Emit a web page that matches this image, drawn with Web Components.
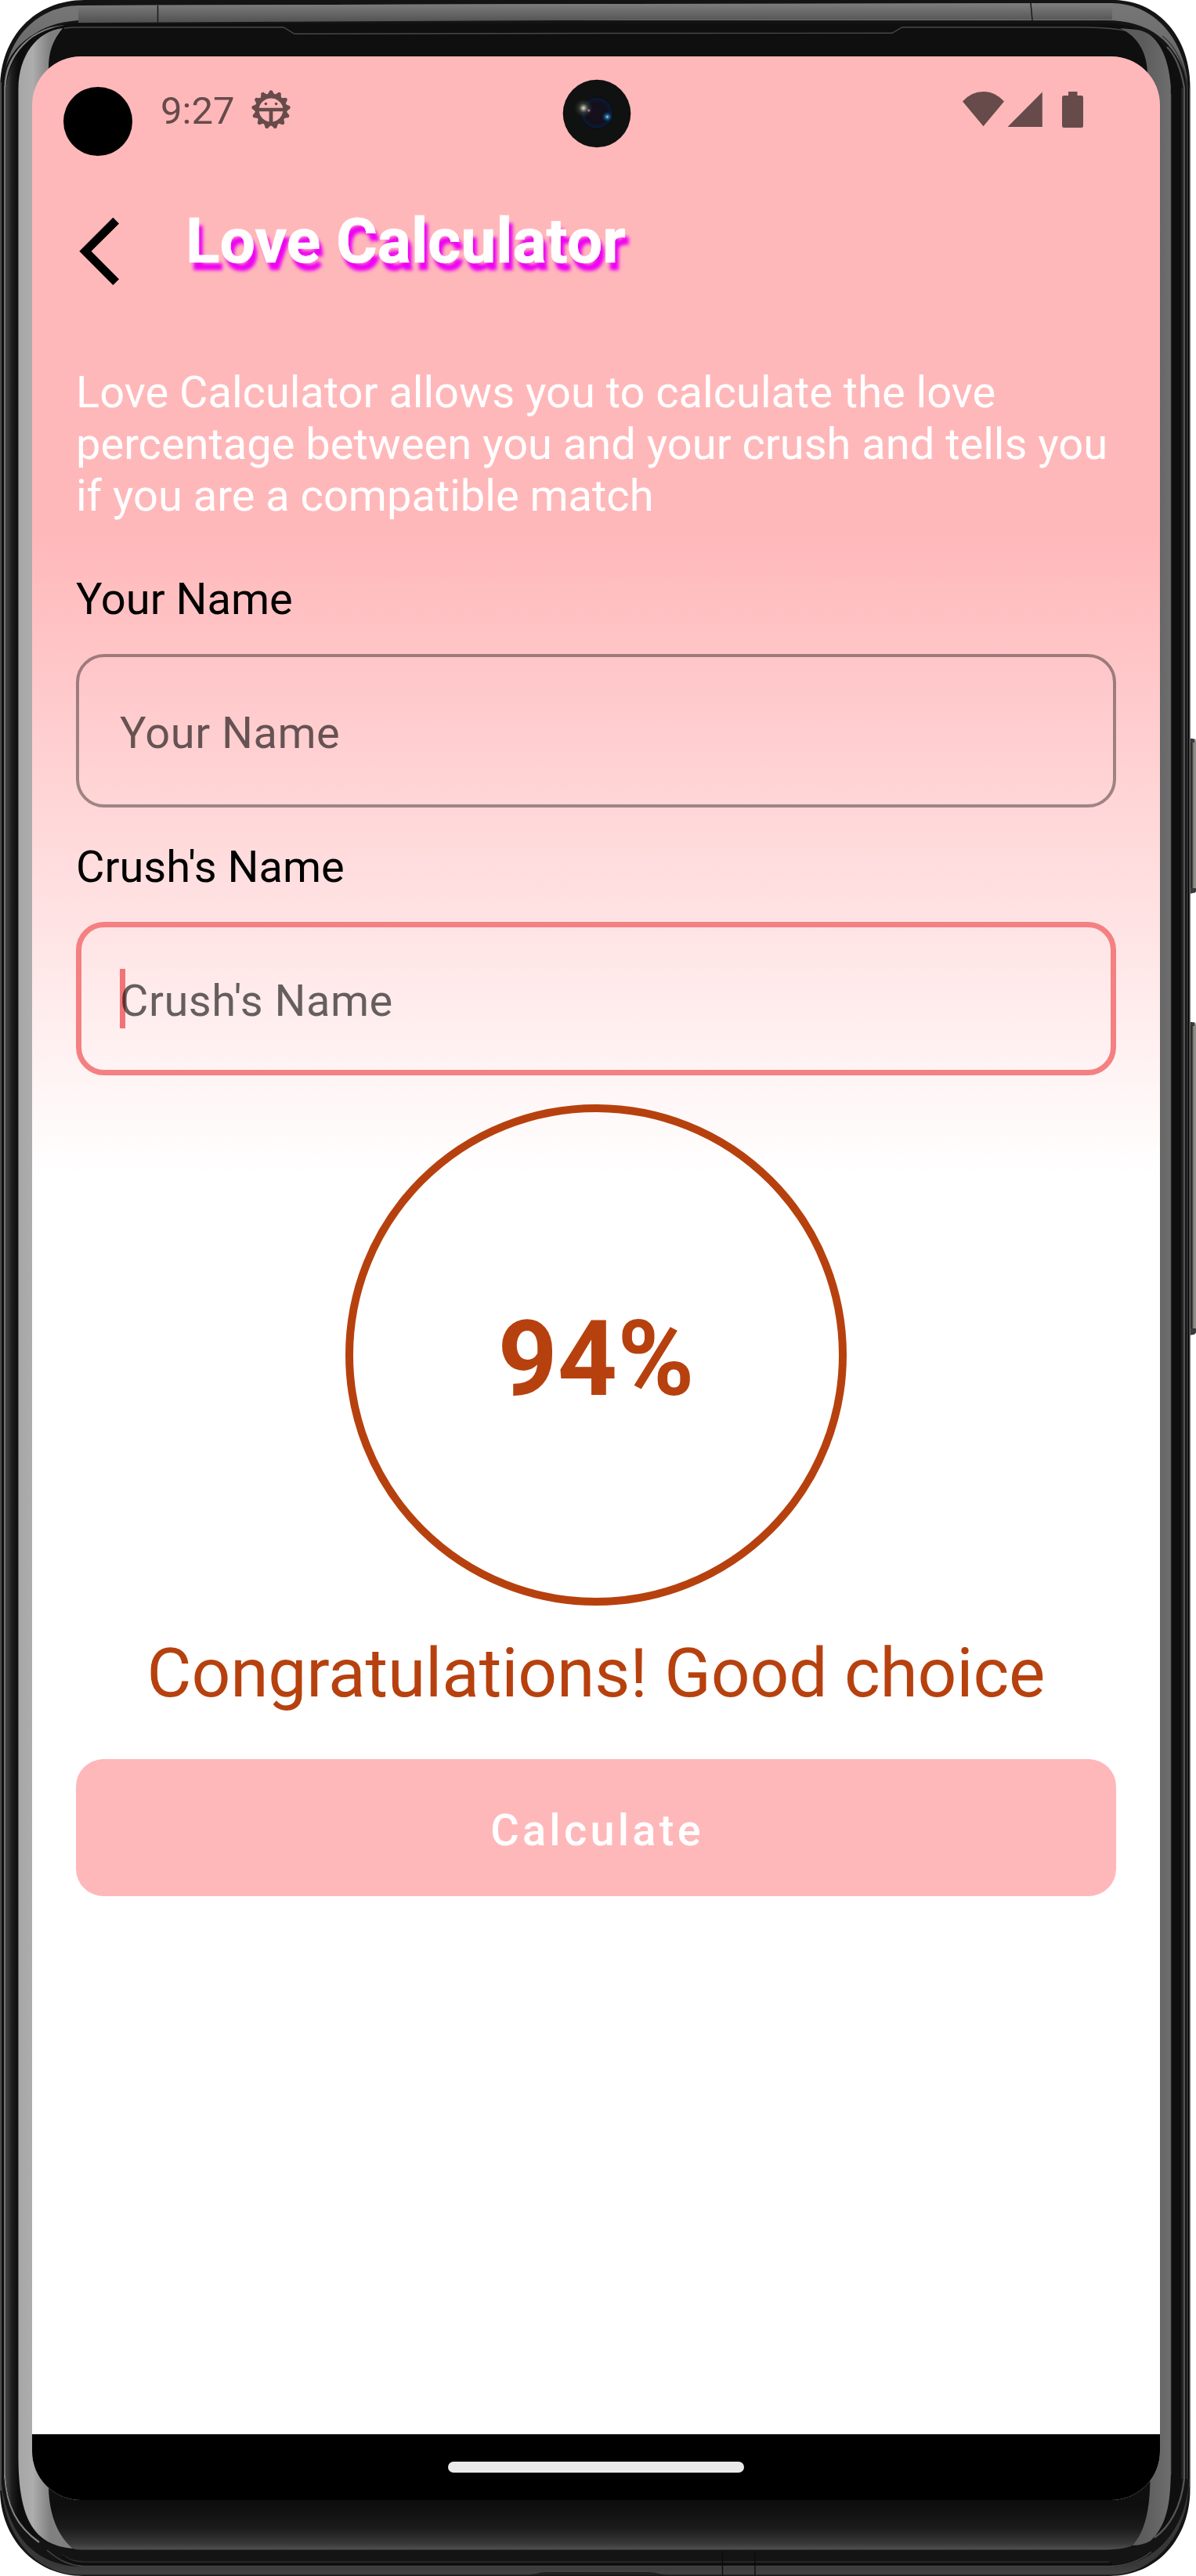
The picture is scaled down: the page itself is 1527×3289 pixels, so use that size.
<!DOCTYPE html>
<html lang="en">
<head>
<meta charset="utf-8">
<title>Love Calculator</title>
<style>
  html, body { margin: 0; background: #fff; }
  body { font-family: Roboto, sans-serif; width: 1527px; height: 3289px; overflow: hidden; }
</style>
</head>
<body>
<phone-frame>
  <love-screen>
    <status-bar slot="status" time="9:27"></status-bar>
    <app-header slot="header">Love Calculator</app-header>
    <intro-text>Love Calculator allows you to calculate the love percentage between you and your crush and tells you if you are a compatible match</intro-text>
    <name-field label="Your Name"></name-field>
    <name-field label="Crush's Name" focused></name-field>
    <score-ring>94%</score-ring>
    <result-message>Congratulations! Good choice</result-message>
    <action-button>Calculate</action-button>
    <nav-bar slot="nav"></nav-bar>
  </love-screen>
</phone-frame>
<script>
function define(name, html, init) {
  const tpl = document.createElement('template');
  tpl.innerHTML = html;
  customElements.define(name, class extends HTMLElement {
    constructor() {
      super();
      this.attachShadow({ mode: 'open' }).append(tpl.content.cloneNode(true));
    }
    connectedCallback() { if (init) init(this, this.shadowRoot); }
  });
}

define('phone-frame', `
<style>
  :host { display: block; position: relative; box-sizing: border-box; width: 1527px; height: 3289px; padding: 72px 46px 97px 41px; }
  svg { position: absolute; left: 0; top: 0; display: block; }
  ::slotted(*) { position: relative; }
</style>
<svg width="1527" height="3289" viewBox="0 0 1527 3289" fill="none">
  <defs>
    <linearGradient id="top" x1="0" y1="5" x2="0" y2="27" gradientUnits="userSpaceOnUse"><stop offset="0" stop-color="#7c7c7c"/><stop offset="1" stop-color="#545454"/></linearGradient>
    <linearGradient id="fadeRing" x1="0" y1="0" x2="0" y2="120" gradientUnits="userSpaceOnUse"><stop offset="0" stop-color="#787878"/><stop offset=".55" stop-color="#6a6a6a"/><stop offset="1" stop-color="#3c3c3c"/></linearGradient>
    <linearGradient id="bevL" x1="7" y1="0" x2="23" y2="0" gradientUnits="userSpaceOnUse"><stop offset="0" stop-color="#484848"/><stop offset=".5" stop-color="#1e1e1e"/><stop offset="1" stop-color="#0d0d0d"/></linearGradient>
    <linearGradient id="bot" x1="0" y1="3200" x2="0" y2="3256" gradientUnits="userSpaceOnUse"><stop offset="0" stop-color="#0e0e0e"/><stop offset=".5" stop-color="#1b1b1b"/><stop offset=".85" stop-color="#383838"/><stop offset="1" stop-color="#525252"/></linearGradient>
    <linearGradient id="silver" x1="24" y1="0" x2="64" y2="0" gradientUnits="userSpaceOnUse"><stop offset="0" stop-color="#a6a6a6"/><stop offset=".45" stop-color="#adadad"/><stop offset="1" stop-color="#808080"/></linearGradient>
    <linearGradient id="silverR" x1="1460" y1="0" x2="1495" y2="0" gradientUnits="userSpaceOnUse"><stop offset="0" stop-color="#5c5c5c"/><stop offset="1" stop-color="#6e6e6e"/></linearGradient>
    <linearGradient id="botRim" x1="0" y1="3275" x2="0" y2="3289" gradientUnits="userSpaceOnUse"><stop offset="0" stop-color="#383838"/><stop offset=".75" stop-color="#424242"/><stop offset="1" stop-color="#202020"/></linearGradient>
    <linearGradient id="key" x1="1518" y1="0" x2="1527" y2="0" gradientUnits="userSpaceOnUse"><stop offset="0" stop-color="#1c1c1c"/><stop offset=".45" stop-color="#333"/><stop offset=".65" stop-color="#8a8883"/><stop offset="1" stop-color="#94918c"/></linearGradient>
  </defs>
  <path fill="url(#key)" d="M1517 943h7q3 0 3 4v189q0 4-3 4l-7 1zM1517 1305h7q3 0 3 4v390q0 4-3 4l-7 1z"/>
  <path fill="#3a3a3a" d="M1518 1134h9v3q0 3-3 3l-6 1zM1518 1696h9v4q0 3-3 4l-6 1zM1519 944h6v4h-6zM1519 1306h6v4h-6z"/>
  <!-- body silhouette -->
  <path fill="#141414" d="M108 0H1424C1480 2 1519.500 48 1519.500 112V3178C1519.500 3240 1478 3289 1416 3289H106C44 3289 0 3240 0 3178V112C0 48 44 0 108 0Z"/>
  <path stroke="#4a4a4a" stroke-width="2" d="M1 3180V105"/>
  <!-- bright top rim -->
  <path fill="url(#fadeRing)" d="M100 7L800 5L1420 4C1468 5 1508 40 1517 105C1500 52 1468 26 1412 26H100C50 30 20 50 4 110C8 46 50 8 100 7Z"/>
  <path fill="url(#top)" d="M100 7L800 5L1420 4V25L800 25.500L100 29Z"/>
  <path stroke="#1a1a1a" stroke-width="1.500" d="M201.500 7V30M1316 4L1318 26"/>
  <!-- bottom rim -->
  <path fill="url(#botRim)" d="M1 3160C6 3225 36 3277 106 3277H1418C1470 3276 1512 3236 1518 3170C1517 3240 1470 3288 1416 3288H106C46 3288 2 3240 1 3160Z"/>
  <path stroke="#464646" stroke-width="1.500" d="M60 3256C74 3268 88 3276.500 110 3276.500H1416C1440 3276 1458 3268 1470 3258"/>
  <path stroke="#2b2b2b" stroke-width="1.500" d="M80 3262C90 3270 100 3271 116 3271H1416"/>
  <path stroke="#0e0e0e" stroke-width="3" d="M80 3264C92 3274 100 3274 116 3274H1420"/>
  <path fill="#202020" d="M674 3288C684 3287 688 3284 698 3284H828C838 3284 842 3287 852 3288Z"/>
  <!-- left and right side rails -->
  <path stroke="#0d0d0d" stroke-width="2" d="M4 3165V110C6 62 46 31 100 31"/>
  <path stroke="#828282" stroke-width="2.200" d="M6.300 3165V112C8 70 40 34 86 33"/>
  <path stroke="#828282" stroke-width="2.200" d="M6.300 3160C8 3200 22 3226 50 3246"/>
  <path fill="#0f0f0f" d="M100 30H1410C1465 30 1509 62 1509 120V3160C1509 3215 1480 3256 1410 3256H105C50 3256 7.500 3215 7.500 3160V120C8 64 45 33 100 30Z"/>
  <path fill="url(#bevL)" d="M7.500 3160V120C8 90 22 62 44 46C28 68 23 90 23 112V3150C23 3190 32 3220 50 3243C22 3225 8 3195 7.500 3160Z"/>
  <path stroke="#2c2c2c" stroke-width="2" d="M1509.500 3165V112"/>
  <path stroke="#555" stroke-width="2.200" d="M1512 3165V112C1508 88 1500 70 1490 60M1512 3165C1508 3200 1494 3226 1474 3240"/>
  <path stroke="#3a3a3a" stroke-width="1.500" d="M1516 3165V112C1513 82 1500 58 1484 46"/>
  <path stroke="#020202" stroke-width="1.600" d="M1517.800 3165V112"/>
  <path stroke="#777" stroke-width="1.300" d="M1519.200 3175V112"/>
  <path stroke="#0c0c0c" stroke-width="1.300" d="M922.500 3257V3288M964 3257V3288"/>
  <!-- lower bezel glow -->
  <path fill="url(#bot)" d="M62 3192H1469C1468 3215 1462 3235 1446 3250C1438 3254 1425 3255.500 1405 3255.500H110C100 3255.500 96 3255 93 3254C75 3240 63 3220 62 3192Z"/>
  <!-- earpiece line -->
  <path stroke="#484848" stroke-width="1.400" d="M82 36C90 35 96 34.700 104 34.700H362L376 43.300L800 42.500L1139 42.300L1152 34.700H1380C1410 35 1440 38 1456 44"/>
  <!-- glass edge reflections -->
  <path fill="url(#silver)" d="M23.500 3140V112C24 72 46 40 80 36C67 52 62 66 62 88V3176C63 3212 74 3238 93 3254C50 3250 24 3226 23.500 3140Z"/>
  <path fill="url(#silverR)" d="M1494.800 3160V110C1492 72 1478 42 1452 38L1430 36C1452 46 1464 66 1465 92V3165H1468.500C1468 3205 1462 3232 1446 3250C1454 3250 1462 3248 1469 3244C1490 3224 1494 3196 1494.800 3160Z"/>
  <path stroke="#666" stroke-width="1" d="M23.500 3140V112M1494.800 3160V120"/>
</svg>
<slot></slot>
`);

define('love-screen', `
<style>
  :host { display: flex; flex-direction: column; width: 1440px; height: 3120px; border-radius: 62px; overflow: hidden;
    background: linear-gradient(#ffb8ba 0, #ffb8ba 610px, #fff 1430px); }
  main { flex: 1; display: flex; flex-direction: column; padding: 102px 56px 0; }
</style>
<slot name="status"></slot>
<slot name="header"></slot>
<main><slot></slot></main>
<slot name="nav"></slot>
`);

define('status-bar', `
<style>
  :host { display: flex; align-items: center; box-sizing: border-box; height: 140px; padding: 0 98px 4px 164px; color: #674b4b; position: relative; }
  .time { font-size: 49px; line-height: 58px; margin-top: 4px; }
  .gap { flex: 1; }
  svg { display: block; fill: currentColor; }
  .gear { margin-left: 22px; }
  .hole { position: absolute; left: 40px; top: 39px; width: 88px; height: 88px; border-radius: 50%; background: #000; }
  .camera { position: absolute; left: 677px; top: 29px; }
</style>
<span class="hole"></span>
<span class="time"></span>
<svg class="gear" width="50" height="50" viewBox="-25 -25 50 50"><g id="g"><path fill-rule="evenodd" d="M0-20.500A20.500 20.500 0 0 1 0 20.500A20.500 20.500 0 0 1 0-20.500ZM-15.300-2.300H15.300A15.700 15.700 0 0 0-15.300-2.300ZM-15.300 2.300A15.700 15.700 0 0 0-2.400 15.500V2.300ZM2.400 2.300V15.500A15.700 15.700 0 0 0 15.300 2.300Z"/><circle cx="-6.600" cy="-7.400" r="1.800"/><circle cx="6.600" cy="-7.400" r="1.800"/></g></svg>
<span class="gap"></span>
<svg width="155" height="48" viewBox="1228 116 155 48">
  <path d="M1229 129.500Q1240 117 1255.500 117T1282 129.500L1255.500 161.300Z"/>
  <path d="M1286.500 162L1330.800 117.500V162Z"/>
  <path d="M1364 117H1375.500V122H1380.500Q1383 122 1383 124.500V160.500Q1383 163 1380.500 163H1358.500Q1356 163 1356 160.500V124.500Q1356 122 1358.500 122H1364Z"/>
</svg>
<svg class="camera" width="88" height="88" viewBox="-44 -44 88 88">
  <defs>
    <radialGradient id="lens"><stop offset="0" stop-color="#17101a"/><stop offset=".6" stop-color="#120f1c"/><stop offset=".88" stop-color="#0b1a30"/><stop offset="1" stop-color="#0a0a0c"/></radialGradient>
    <radialGradient id="warm"><stop offset="0" stop-color="#e2e5d6"/><stop offset=".2" stop-color="#8d9183"/><stop offset=".5" stop-color="#3c4036" stop-opacity=".7"/><stop offset="1" stop-color="#2a2d26" stop-opacity="0"/></radialGradient>
    <radialGradient id="blue"><stop offset="0" stop-color="#c8ecff"/><stop offset=".25" stop-color="#2a78b0"/><stop offset="1" stop-color="#0a2a50" stop-opacity="0"/></radialGradient>
    <radialGradient id="rose"><stop offset="0" stop-color="#e0b0d8"/><stop offset="1" stop-color="#503060" stop-opacity="0"/></radialGradient>
  </defs>
  <circle r="43.300" fill="#101111"/>
  <circle r="21" cx="0" cy="-.7" fill="url(#lens)"/>
  <circle r="12" cx="-17" cy="-7" fill="url(#warm)"/>
  <circle r="3" cx="-10.300" cy="-4" fill="url(#rose)"/>
  <circle r="7" cx="13.300" cy="4.200" fill="url(#blue)"/>
</svg>
`, (el, root) => {
  root.querySelector('.time').textContent = el.getAttribute('time');
  const g = root.querySelector('#g');
  for (let i = 0; i < 13; i++) {
    const tooth = document.createElementNS('http://www.w3.org/2000/svg', 'path');
    tooth.setAttribute('d', 'M-5.200 18.500L-2.400 22.800Q-2.200 24.800 0 24.800T2.400 22.800L5.200 18.500Z');
    tooth.setAttribute('transform', 'rotate(' + (180 + i * 360 / 13) + ')');
    g.append(tooth);
  }
});

define('app-header', `
<style>
  :host { display: flex; align-items: flex-start; box-sizing: border-box; padding: 48px 56px 0 60px; height: 154px; color: #fff; font-size: 80.500px; font-weight: 700; line-height: 95px; }
  svg { display: block; margin-top: 16.500px; }
  h1 { margin: 0 0 0 84px; font: inherit; text-shadow: 5px 9.500px 4px #ee00f4; -webkit-text-stroke: .6px #fff; }
</style>
<svg width="52" height="88" viewBox="101 276.500 52 88"><path d="M101.300 320.300L144.300 277.300L152 285L116.500 320.300L152 356L144.300 363.500Z"/></svg>
<h1><slot></slot></h1>
`);

define('intro-text', `
<style>
  :host { display: block; color: #fff; font-size: 56px; line-height: 66px; margin-bottom: 66px; }
</style>
<slot></slot>
`);

define('name-field', `
<style>
  :host { display: block; font-size: 56px; line-height: 66px; margin-bottom: 43px; color: #000; }
  :host([focused]) { margin-bottom: 37px; }
  label { display: block; margin-bottom: 37px; }
  .box { position: relative; box-sizing: border-box; height: 196px; border-radius: 36px; border: 4px solid rgba(0,0,0,.38); padding: 64px 52px 0; letter-spacing: .5px; color: rgba(0,0,0,.6); }
  :host([focused]) .box { border: 7px solid #f48082; padding: 61px 49px 0; }
  .caret { display: none; position: absolute; left: 49px; top: 53px; width: 7px; height: 76px; background: #f17376; }
  :host([focused]) .caret { display: block; }
  .hint { position: relative; }
</style>
<label></label>
<div class="box"><span class="caret"></span><span class="hint"></span></div>
`, (el, root) => {
  root.querySelector('label').textContent = el.getAttribute('label');
  root.querySelector('.hint').textContent = el.getAttribute('label');
});

define('score-ring', `
<style>
  :host { display: flex; align-items: center; justify-content: center; align-self: center; box-sizing: border-box; width: 640px; height: 640px; border: 10.500px solid #b7410e; border-radius: 50%; color: #b7410e; font-size: 133px; line-height: 156px; font-weight: 700; padding-top: 12px; }
</style>
<slot></slot>
`);

define('result-message', `
<style>
  :host { display: block; text-align: center; color: #b7410e; font-size: 87.500px; line-height: 103px; letter-spacing: -.15px; margin: 35px 0 58px; white-space: nowrap; }
</style>
<slot></slot>
`);

define('action-button', `
<style>
  :host { display: block; }
  button { display: flex; align-items: center; justify-content: center; box-sizing: border-box; width: 100%; height: 175px; border: 0; border-radius: 35px; margin: 0; background: #ffb8ba; color: #fff; font: 500 56px/66px Roboto, sans-serif; letter-spacing: 4.250px; padding: 6px 0 0 3px; }
</style>
<button><slot></slot></button>
`);

define('nav-bar', `
<style>
  :host { display: flex; align-items: center; justify-content: center; height: 84px; background: #000; }
  span { width: 378px; height: 14px; border-radius: 7px; background: #eaeaea; }
</style>
<span></span>
`);
</script>
</body>
</html>
